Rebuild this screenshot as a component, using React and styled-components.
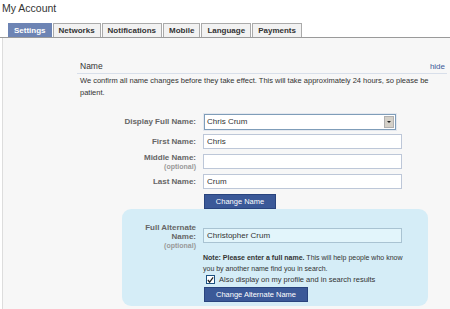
import React from "react";
import styled, { createGlobalStyle } from "styled-components";

const GlobalStyle = createGlobalStyle`
  body {
    margin: 0;
    background: #fff;
    font-family: "Liberation Sans", Arial, sans-serif;
    color: #333;
  }
`;

const tabs = ["Settings", "Networks", "Notifications", "Mobile", "Language", "Payments"];

export default function App() {
  return (
    <Page>
      <GlobalStyle />
      <Title>My Account</Title>
      <TabBar>
        {tabs.map((t, i) => (
          <Tab key={t} $active={i === 0}>
            {t}
          </Tab>
        ))}
      </TabBar>
      <Content>
        <Section>
          <Heading>
            <span>Name</span>
            <HideLink href="#">hide</HideLink>
          </Heading>
          <Intro>
            We confirm all name changes before they take effect. This will take
            approximately 24 hours, so please be patient.
          </Intro>
          <Form>
            <Label>Display Full Name:</Label>
            <Select>
              <span>Chris Crum</span>
              <SelectButton>
                <Arrow />
              </SelectButton>
            </Select>

            <Label>First Name:</Label>
            <Input defaultValue="Chris" />

            <Label>
              Middle Name:
              <Optional>(optional)</Optional>
            </Label>
            <Input defaultValue="" />

            <Label>Last Name:</Label>
            <Input defaultValue="Crum" />

            <span />
            <Button $w={72}>Change Name</Button>
          </Form>

          <AltBox>
            <AltLabel>
              Full Alternate
              <br />
              Name:
              <Optional>(optional)</Optional>
            </AltLabel>
            <AltFields>
              <AltInput defaultValue="Christopher Crum" />
              <Note>
                <NoteLead>Note: Please enter a full name.</NoteLead> This will help
                people who know you by another name find you in search.
              </Note>
              <CheckRow>
                <CheckBox>
                  <svg width="8" height="8" viewBox="0 0 8 8">
                    <path d="M1 4 L3 6.5 L7 1" stroke="#222" strokeWidth="1.4" fill="none" />
                  </svg>
                </CheckBox>
                Also display on my profile and in search results
              </CheckRow>
              <Button $w={104}>Change Alternate Name</Button>
            </AltFields>
          </AltBox>
        </Section>
      </Content>
    </Page>
  );
}

const Page = styled.div`
  width: 450px;
  height: 309px;
  overflow: hidden;
`;

const Title = styled.div`
  font-size: 10.5px;
  color: #333;
  padding: 2px 0 0 2px;
  height: 21px;
  line-height: 12px;
`;

const TabBar = styled.div`
  display: flex;
  gap: 1px;
  padding-left: 8px;
  border-bottom: 1px solid #9a9a9a;
  height: 14px;
`;

const Tab = styled.div`
  font-size: 8px;
  font-weight: bold;
  line-height: 13px;
  padding: 0 5px;
  color: ${(p) => (p.$active ? "#fff" : "#333")};
  background: ${(p) => (p.$active ? "#6d84b4" : "#f2f2f2")};
  border: 1px solid ${(p) => (p.$active ? "#6d84b4" : "#aaa")};
  border-bottom: none;
`;

const Content = styled.div`
  height: 271px;
  background: #f7f7f7;
  margin-left: 2px;
  border-left: 1px solid #ddd;
`;

const Section = styled.div`
  margin-left: 74px;
  width: 370px;
  padding-top: 23px;
`;

const Heading = styled.div`
  display: flex;
  justify-content: space-between;
  align-items: flex-end;
  font-size: 8.5px;
  color: #333;
  padding: 0 2px 2px 3px;
  border-bottom: 1px solid #d8dfea;
`;

const HideLink = styled.a`
  color: #3b5998;
  text-decoration: none;
  font-size: 8px;
`;

const Intro = styled.p`
  margin: 1px 0 0 3px;
  font-size: 7.5px;
  line-height: 12px;
  color: #333;
`;

const Form = styled.div`
  display: grid;
  grid-template-columns: 119px 199px;
  grid-auto-rows: 15px;
  column-gap: 7px;
  row-gap: 5px;
  align-items: center;
  margin-top: 15px;
`;

const Label = styled.div`
  text-align: right;
  font-size: 8px;
  font-weight: bold;
  color: #666;
  line-height: 9px;
`;

const Optional = styled.span`
  display: block;
  font-size: 7px;
  color: #999;
  line-height: 9px;
`;

const Input = styled.input`
  box-sizing: border-box;
  height: 15px;
  width: 199px;
  border: 1px solid #bdc7d8;
  background: #fff;
  font-family: "Liberation Sans", Arial, sans-serif;
  font-size: 8px;
  color: #333;
  padding: 0 3px;
  outline: none;
`;

const Select = styled.div`
  box-sizing: border-box;
  width: 192px;
  height: 16px;
  border: 1px solid #7f9db9;
  outline: 1px solid #e4e8ef;
  background: #fff;
  display: flex;
  align-items: center;
  justify-content: space-between;
  font-size: 8px;
  color: #333;
  padding-left: 2px;
  margin-left: 1px;
`;

const SelectButton = styled.div`
  width: 10px;
  height: 12px;
  margin-right: 1px;
  background: #d4d0c8;
  border: 1px solid #b0b0b0;
  box-sizing: border-box;
  display: flex;
  align-items: center;
  justify-content: center;
`;

const Arrow = styled.div`
  width: 0;
  height: 0;
  border-left: 2px solid transparent;
  border-right: 2px solid transparent;
  border-top: 2px solid #222;
  margin-top: 1px;
`;

const Button = styled.button`
  box-sizing: border-box;
  width: ${(p) => p.$w}px;
  height: 15px;
  background: #3b5998;
  border: 1px solid #29447e;
  color: #fff;
  font-family: "Liberation Sans", Arial, sans-serif;
  font-size: 7.5px;
  padding: 0;
  margin-left: 1px;
`;

const AltBox = styled.div`
  margin-left: 45px;
  width: 306px;
  background: #d5edf7;
  border-radius: 9px;
  display: grid;
  grid-template-columns: 74px 1fr;
  column-gap: 7px;
  padding: 14px 0 4px;
  box-sizing: border-box;
`;

const AltLabel = styled.div`
  text-align: right;
  font-size: 8px;
  font-weight: bold;
  color: #666;
  line-height: 9px;
`;

const AltFields = styled.div`
  display: flex;
  flex-direction: column;
  align-items: flex-start;

  & > button {
    margin-top: 2px;
  }
`;

const AltInput = styled(Input)`
  margin-top: 5px;
  background: #e2f5fb;
  border-color: #a9c3d2;
`;

const Note = styled.div`
  margin-top: 9px;
  font-size: 7px;
  line-height: 11px;
  color: #333;
  width: 200px;
`;

const NoteLead = styled.span`
  font-weight: bold;
`;

const CheckRow = styled.div`
  display: flex;
  align-items: center;
  gap: 4px;
  font-size: 7.5px;
  line-height: 11px;
  height: 11px;
  color: #333;
  margin-left: 3px;
`;

const CheckBox = styled.div`
  box-sizing: border-box;
  width: 9px;
  height: 9px;
  border: 1px solid #1c5180;
  background: #fff;
  display: flex;
  align-items: center;
  justify-content: center;
`;
